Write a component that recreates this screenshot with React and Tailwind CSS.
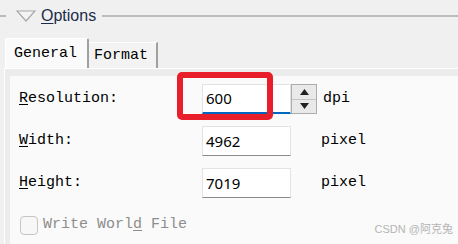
const mono = { fontFamily: '"Liberation Mono", "Courier New", monospace' };

const Field = ({ value, active }) => (
    <div className={`w-[89px] h-[30px] bg-white border border-[#e3e3e3] flex items-center pl-[3px] text-[15px] text-black font-['Noto_Sans',sans-serif] ${active ? "border-b-2 border-b-[#0067c0]" : "border-b-[#8a8a8a]"}`}>
        {value}
    </div>
);

const Row = ({ hot, rest, children }) => (
    <div className="flex items-center h-[30px]">
        <div className="w-[183px] text-[15px] text-black" style={mono}>
            <span className="underline underline-offset-2">{hot}</span>{rest}
        </div>
        {children}
    </div>
);

export default function App() {
    return (
        <div className="relative w-[458px] h-[244px] bg-[#f0f0f0] flex flex-col overflow-hidden">
            {/* header */}
            <div className="h-[32px] flex items-center">
                <div className="w-[6px] h-[2px] bg-[#bcbcbc]" />
                <svg width="20" height="12" viewBox="0 0 20 12" className="ml-[10px]">
                    <path d="M1 1 L19 1 L10 11 Z" fill="#f4f4f4" stroke="#a8a8a8" strokeWidth="1.2" />
                </svg>
                <span className="ml-[5px] text-[16px] text-[#1c2b4a] font-['Liberation_Sans',sans-serif]">
                    <span className="underline underline-offset-2">O</span>ptions
                </span>
                <div className="flex-1 ml-[6px] h-[2px] bg-[#bcbcbc]" />
            </div>

            {/* tabs */}
            <div className="h-[36px] flex items-end pl-[5px]">
                <div className="w-[84px] h-[30px] bg-[#fafafa] border-l border-t border-white border-r-2 border-r-[#a0a0a0] rounded-tr-[2px] flex items-center pl-[8px] pt-[1px] text-[15px] text-black" style={mono}>
                    General
                </div>
                <div className="w-[69px] h-[26px] bg-[#f3f3f3] border-t border-white border-r-2 border-r-[#a0a0a0] flex items-center pl-[5px] pt-[2px] text-[15px] text-black" style={mono}>
                    Format
                </div>
            </div>

            {/* panel */}
            <div className="flex-1 ml-[4px] border-l border-t border-white bg-[#ececec] pl-[5px] pt-[7px]">
                <div className="h-full bg-[#fafafa] pl-[9px] pt-[8px] flex flex-col gap-[12px]">
                    <Row hot="R" rest="esolution:">
                        <div className="relative">
                            <Field value="600" active />
                            <div className="absolute left-[-25px] top-[-12px] w-[96px] h-[48px] border-[6px] border-[#e81e2a] rounded-[5px]" />
                        </div>
                        <div className="w-[26px] h-[30px] border border-[#adadad] bg-[#e9e9e9] flex flex-col">
                            <div className="flex-1 flex items-center justify-center border-b border-[#c4c4c4]">
                                <svg width="9" height="6" viewBox="0 0 9 6"><path d="M4.5 0 L9 6 L0 6 Z" fill="#222" /></svg>
                            </div>
                            <div className="flex-1 flex items-center justify-center">
                                <svg width="9" height="6" viewBox="0 0 9 6"><path d="M0 0 L9 0 L4.5 6 Z" fill="#222" /></svg>
                            </div>
                        </div>
                        <span className="ml-[6px] text-[15px] text-black" style={mono}>dpi</span>
                    </Row>
                    <Row hot="W" rest="idth:">
                        <Field value="4962" />
                        <span className="ml-[30px] text-[15px] text-black" style={mono}>pixel</span>
                    </Row>
                    <Row hot="H" rest="eight:">
                        <Field value="7019" />
                        <span className="ml-[30px] text-[15px] text-black" style={mono}>pixel</span>
                    </Row>
                    <div className="flex items-center mt-[4px] pl-[1px]">
                        <div className="w-[18px] h-[19px] border border-[#c6c6c6] rounded-[4px] bg-[#f7f7f7]" />
                        <span className="ml-[5px] text-[15px] text-[#8d8d8d]" style={mono}>
                            Write Worl<span className="underline underline-offset-2">d</span> File
                        </span>
                    </div>
                </div>
            </div>

            <div className="absolute right-[5px] bottom-[7px] text-[11px] text-[#b5b5b5] font-['Liberation_Sans','Noto_Sans_CJK_SC',sans-serif]">
                CSDN @阿克兔
            </div>
        </div>
    );
}
